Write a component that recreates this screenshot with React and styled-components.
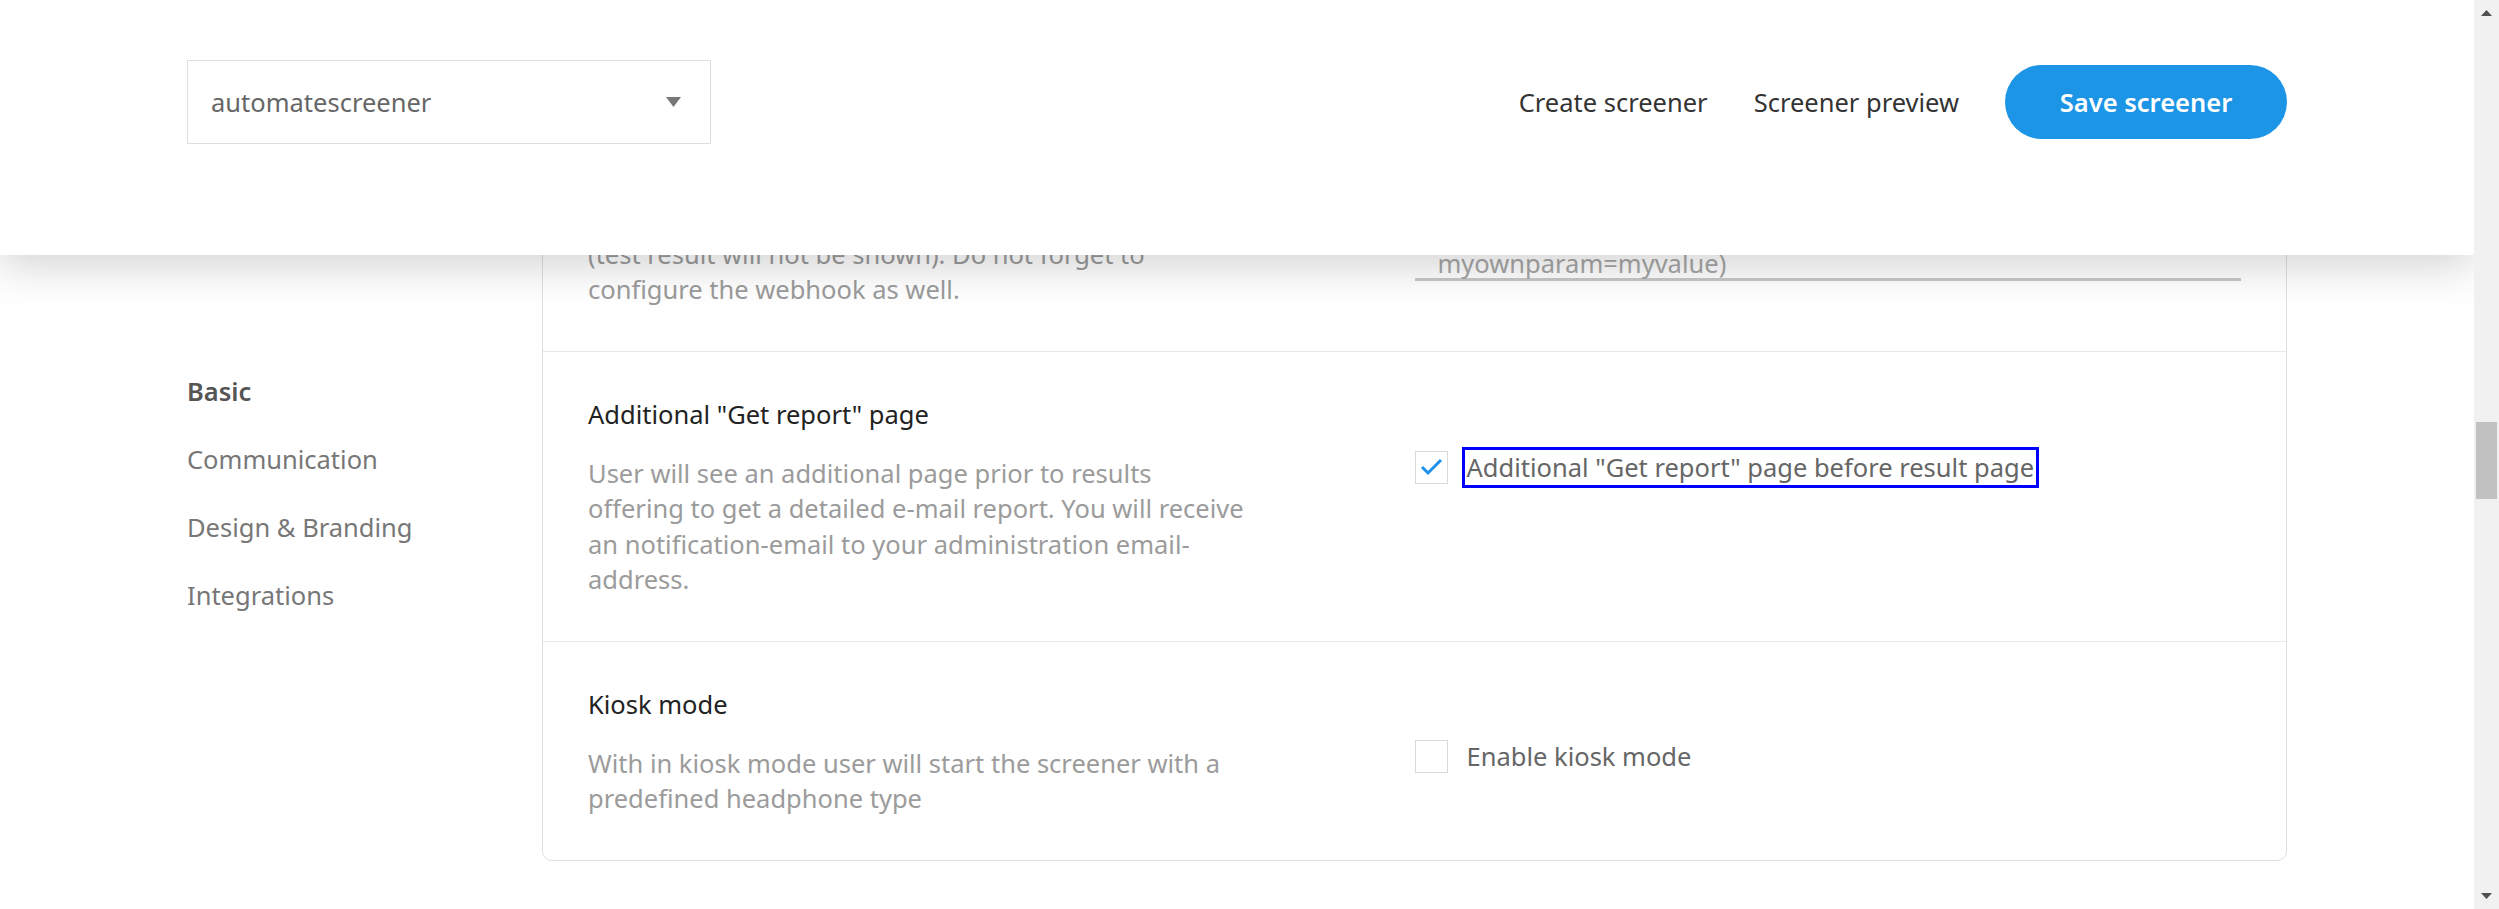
import React from 'react';
import styled, { createGlobalStyle } from 'styled-components';

const GlobalStyle = createGlobalStyle`
  html, body {
    margin: 0;
    padding: 0;
    height: 100%;
    overflow: hidden;
    background: #fff;
  }
  body {
    font-family: "Noto Sans", "Open Sans", sans-serif;
    -webkit-font-smoothing: antialiased;
  }
  * { box-sizing: border-box; }
`;

const settings = [
  {
    title: 'Webhook',
    lines: [
      'If a webhook URL is set, screener results are',
      'sent to your own server after each session',
      '(test result will not be shown). Do not forget to',
      'configure the webhook as well.',
    ],
    field: ['Webhook URL (you can add your own', 'parameters, e.g. ?', 'myownparam=myvalue)'],
  },
  {
    title: 'Additional "Get report" page',
    text: 'User will see an additional page prior to results offering to get a detailed e-mail report. You will receive an notification-email to your administration email-address.',
    checkbox: { label: 'Additional "Get report" page before result page', checked: true, focused: true },
  },
  {
    title: 'Kiosk mode',
    text: 'With in kiosk mode user will start the screener with a predefined headphone type',
    checkbox: { label: 'Enable kiosk mode', checked: false },
  },
];

const navItems = ['Basic', 'Communication', 'Design & Branding', 'Integrations'];

const App = () => {
  return (
    <Screen>
      <GlobalStyle />
      <Viewport>
        <TopBar>
          <TopBarInner>
            <Select>
              <span>automatescreener</span>
              <svg width="15" height="10" viewBox="0 0 15 10">
                <polygon points="0,0 15,0 7.5,10" fill="#777" />
              </svg>
            </Select>
            <Actions>
              <NavLink href="#">Create screener</NavLink>
              <NavLink href="#">Screener preview</NavLink>
              <SaveButton>Save screener</SaveButton>
            </Actions>
          </TopBarInner>
        </TopBar>

        <Content>
          <SideNav>
            {navItems.map((item, i) => (
              <SideNavItem key={item} $active={i === 0}>
                {item}
              </SideNavItem>
            ))}
          </SideNav>

          <Card>
            {settings.map((s) => (
              <SettingRow key={s.title}>
                <Info>
                  <Title>{s.title}</Title>
                  <Description>
                    {s.lines
                      ? s.lines.map((l) => <Line key={l}>{l}</Line>)
                      : s.text}
                  </Description>
                </Info>
                <Control>
                  {s.field && (
                    <Field>
                      {s.field.map((l) => (
                        <Line key={l}>{l}</Line>
                      ))}
                    </Field>
                  )}
                  {s.checkbox && (
                    <CheckRow>
                      <Box>
                        {s.checkbox.checked && (
                          <svg width="33" height="33" viewBox="0 0 33 33">
                            <path
                              d="M7 16 L13 22 L26 9"
                              fill="none"
                              stroke="#1e90e8"
                              strokeWidth="3"
                            />
                          </svg>
                        )}
                      </Box>
                      <CheckLabel $focused={s.checkbox.focused}>{s.checkbox.label}</CheckLabel>
                    </CheckRow>
                  )}
                </Control>
              </SettingRow>
            ))}
          </Card>
        </Content>
      </Viewport>

      <ScrollTrack>
        <svg width="11" height="6" viewBox="0 0 11 6" style={{ marginTop: 10 }}>
          <polygon points="0,6 11,6 5.5,0" fill="#505050" />
        </svg>
        <Thumb />
        <DownArrow width="11" height="6" viewBox="0 0 11 6">
          <polygon points="0,0 11,0 5.5,6" fill="#505050" />
        </DownArrow>
      </ScrollTrack>
    </Screen>
  );
};

const Screen = styled.div`
  display: flex;
  height: 100vh;
  overflow: hidden;
`;

const Viewport = styled.div`
  flex: 1;
  position: relative;
  overflow: hidden;
`;

const TopBar = styled.header`
  position: absolute;
  top: 0;
  left: 0;
  right: 0;
  height: 255px;
  background: #fff;
  box-shadow: 0 12px 40px rgba(0, 0, 0, 0.17);
  z-index: 10;
`;

const TopBarInner = styled.div`
  width: 2100px;
  margin: 0 auto;
  padding-top: 60px;
  display: flex;
  align-items: center;
  justify-content: space-between;
`;

const Select = styled.div`
  width: 524px;
  height: 84px;
  border: 1px solid #dedede;
  display: flex;
  align-items: center;
  justify-content: space-between;
  padding: 0 29px 0 23px;
  font-size: 25.5px;
  color: #666;
`;

const Actions = styled.div`
  display: flex;
  align-items: center;
  gap: 46px;
`;

const NavLink = styled.a`
  font-size: 25.5px;
  color: #333;
  text-decoration: none;
`;

const SaveButton = styled.button`
  width: 282px;
  height: 74px;
  border: none;
  border-radius: 37px;
  background: #1d95e6;
  color: #fff;
  font-family: inherit;
  font-weight: 600;
  font-size: 25.5px;
  cursor: pointer;
`;

const Content = styled.main`
  width: 2100px;
  margin: 0 auto;
  padding-top: 61.5px;
  display: flex;
  align-items: flex-start;
`;

const SideNav = styled.nav`
  width: 355px;
  flex-shrink: 0;
  padding-top: 296.5px;
  display: flex;
  flex-direction: column;
`;

const SideNavItem = styled.div`
  font-size: 25.5px;
  line-height: 35.2px;
  padding: 16.4px 0;
  color: ${(p) => (p.$active ? '#555' : '#777')};
  font-weight: ${(p) => (p.$active ? 600 : 400)};
`;

const Card = styled.section`
  flex: 1;
  border: 1px solid #e0e0e0;
  border-radius: 10px;
  background: #fff;
`;

const SettingRow = styled.div`
  display: grid;
  grid-template-columns: 1fr 1fr;
  padding: 45px 45px 43.5px;

  & + & {
    border-top: 1px solid #e8e8e8;
  }
`;

const Info = styled.div`
  max-width: 662px;
`;

const Title = styled.div`
  font-size: 25.5px;
  line-height: 35.2px;
  color: #222;
  margin-bottom: 24px;
`;

const Description = styled.p`
  margin: 0;
  font-size: 25.5px;
  line-height: 35.2px;
  color: #9b9b9b;
`;

const Line = styled.span`
  display: block;
`;

const Control = styled.div`
  padding-top: 52.5px;
`;

const Field = styled.div`
  border-bottom: 3px solid #c8c8c8;
  padding: 27.5px 23px 0;
  font-size: 25.5px;
  line-height: 30px;
  color: #a6a6a6;
`;

const CheckRow = styled.div`
  display: flex;
  align-items: center;
  height: 35.2px;
`;

const Box = styled.span`
  width: 33px;
  height: 33px;
  flex-shrink: 0;
  border: 1px solid #d9d9d9;
  display: flex;
  align-items: center;
  justify-content: center;

  svg {
    display: block;
    flex-shrink: 0;
  }
`;

const CheckLabel = styled.label`
  margin-left: 17px;
  padding: 0 2px;
  font-size: 25.5px;
  line-height: 35.2px;
  color: #666;
  outline: ${(p) => (p.$focused ? '3px solid #0000ff' : 'none')};
`;

const ScrollTrack = styled.div`
  width: 25px;
  flex-shrink: 0;
  background: #f1f1f1;
  display: flex;
  flex-direction: column;
  align-items: center;
`;

const Thumb = styled.div`
  width: 21px;
  height: 77px;
  margin-top: 406px;
  background: #c1c1c1;
`;

const DownArrow = styled.svg`
  margin-top: auto;
  margin-bottom: 10px;
`;

export default App;
